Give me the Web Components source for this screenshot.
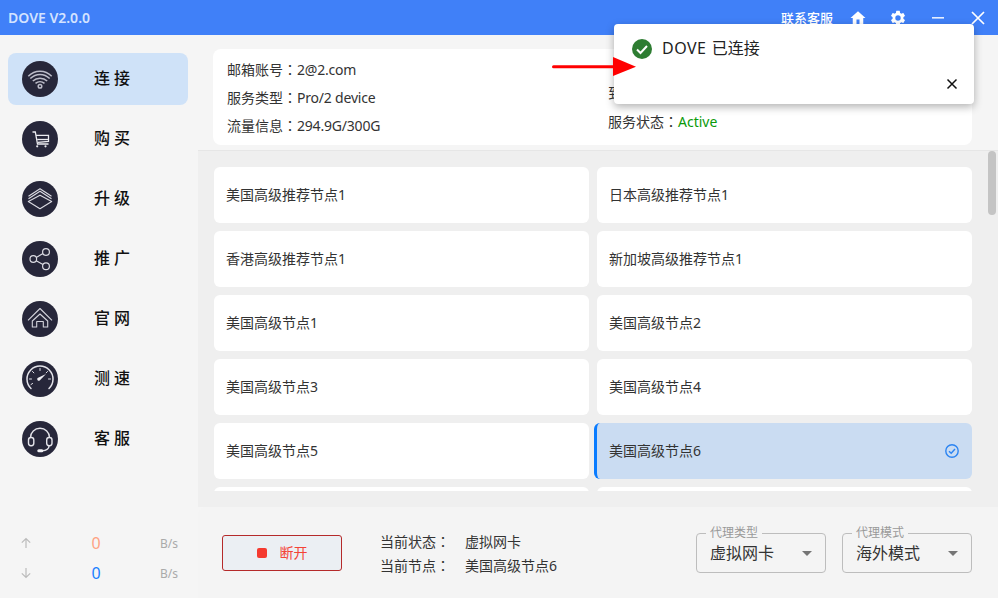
<!DOCTYPE html>
<html>
<head>
<meta charset="utf-8">
<title>DOVE</title>
<style>
  html, body { margin: 0; width: 998px; height: 598px; overflow: hidden; }
  body { font-family: "Noto Sans", "Noto Sans CJK SC", sans-serif; font-size: 14px; color: #222; }
</style>
</head>
<body>
<dove-app>
  <dove-titlebar slot="top" version="DOVE V2.0.0"></dove-titlebar>
  <dove-sidebar slot="side">
    <dove-nav label="连接" active>
      <svg viewBox="0 0 36 36"><g fill="none" stroke="#bcbcc8" stroke-width="1.500"><path d="M6.300 15.300c6.600-6.800 16.800-6.800 23.400 0"/><path d="M8.300 17.500c5.600-5.400 13.800-5.400 19.400 0" stroke-width="1.600"/><path d="M10.800 20c4-3.700 10.400-3.700 14.400 0"/><path d="M13.500 22.400c2.600-2.200 6.400-2.200 9 0"/><circle cx="18" cy="25.300" r="1.800"/></g></svg>
    </dove-nav>
    <dove-nav label="购买">
      <svg viewBox="0 0 36 36"><g fill="none" stroke="#ececf0" stroke-width="1.300"><path d="M10.500 11h2.800l2.200 12h11"/><path d="M14 14.300h12.500v6l-10.500 1"/><path d="M15.200 18.500h11.300"/></g><circle cx="15.200" cy="25.300" r="1.100" fill="#ececf0"/><circle cx="23.500" cy="25.300" r="1.100" fill="#ececf0"/></svg>
    </dove-nav>
    <dove-nav label="升级">
      <svg viewBox="0 0 36 36"><g fill="none" stroke="#dcdce3" stroke-width="1.100" stroke-linejoin="round"><path d="M6.500 15.300 18 7.700l11.500 7.600"/><path d="M6.500 17.800 18 10.300l11.500 7.500"/><path d="M18 14.300 29.700 20.500 18 27.700 6.300 20.500z"/></g></svg>
    </dove-nav>
    <dove-nav label="推广">
      <svg viewBox="0 0 36 36"><g fill="none" stroke="#dcdce3" stroke-width="1.200"><circle cx="11.300" cy="18" r="3.300"/><circle cx="24" cy="11" r="3.400"/><circle cx="24" cy="25.300" r="3.400"/><path d="M14.200 16.400 21 12.600M14.200 19.700l6.800 3.900"/></g></svg>
    </dove-nav>
    <dove-nav label="官网">
      <svg viewBox="0 0 36 36"><g fill="none" stroke="#d4d4dc" stroke-width="1.100" stroke-linejoin="round"><path d="M6 19.300 18 7.500l12 11.800"/><path d="M10.300 26v-6L18 13l7.700 7v6h-4.400v-5.500h-6.600V26z"/></g></svg>
    </dove-nav>
    <dove-nav label="测速">
      <svg viewBox="0 0 36 36"><g fill="none" stroke="#e4e4ea" stroke-width="1.500" stroke-linecap="round"><path d="M9 27.500a13 13 0 1 1 18 0"/><path stroke-width="1" d="M18 7.500v2M7.500 18h2M26.500 18h2M10.500 10.500l1.400 1.400M25.500 10.500l-1.400 1.400M9 23.500l1.600-1"/></g><path d="M15.600 17 24 13l-6.300 6.600a1.700 1.700 0 0 1-2.100-2.600z" fill="#f0f0f4"/></svg>
    </dove-nav>
    <dove-nav label="客服">
      <svg viewBox="0 0 36 36"><g fill="none" stroke="#e4e4ea" stroke-width="1.400"><path d="M8.500 17v-.500a9.500 9.200 0 0 1 19 0v.500"/><rect x="6.500" y="16.500" width="5.300" height="8.200" rx="2.400"/><rect x="24.700" y="16.500" width="5.300" height="8.200" rx="2.400"/><path d="M27 25c0 3-3 4.500-7 4.700"/></g><rect x="15.300" y="28.200" width="6" height="3" rx="1.500" fill="#f0f0f4"/></svg>
    </dove-nav>
    <dove-speed slot="speed"></dove-speed>
  </dove-sidebar>
  <dove-info slot="info"></dove-info>
  <dove-nodelist slot="list">
    <dove-node>美国高级推荐节点1</dove-node>
    <dove-node>日本高级推荐节点1</dove-node>
    <dove-node>香港高级推荐节点1</dove-node>
    <dove-node>新加坡高级推荐节点1</dove-node>
    <dove-node>美国高级节点1</dove-node>
    <dove-node>美国高级节点2</dove-node>
    <dove-node>美国高级节点3</dove-node>
    <dove-node>美国高级节点4</dove-node>
    <dove-node>美国高级节点5</dove-node>
    <dove-node selected>美国高级节点6</dove-node>
    <dove-node></dove-node>
    <dove-node></dove-node>
  </dove-nodelist>
  <dove-footer slot="footer">
    <dove-select label="代理类型" value="虚拟网卡"></dove-select>
    <dove-select label="代理模式" value="海外模式"></dove-select>
  </dove-footer>
  <dove-toast slot="overlay"><span style="letter-spacing:.5px">DOVE</span> 已连接</dove-toast>
</dove-app>

<script>
(function () {
    // small helper, every element just stamps its html into an open shadow root
    function define(name, html) {
        class El extends HTMLElement {
            constructor() {
                super();
                this.attachShadow({ mode: 'open' });
            }
            connectedCallback() {
                let out = html;
                for (const a of this.getAttributeNames()) {
                    out = out.split('{{' + a + '}}').join(this.getAttribute(a));
                }
                this.shadowRoot.innerHTML = out;
            }
        }
        customElements.define(name, El);
    }

    define('dove-app', `
      <style>
        :host { display: grid; grid-template-columns: 198px 800px; grid-template-rows: 35px 563px; width: 998px; height: 598px; position: relative; overflow: hidden; background: #f5f5f5; }
        .top { grid-column: 1 / 3; }
        .main { display: flex; flex-direction: column; min-height: 0; position: relative; }
      </style>
      <div class="top"><slot name="top"></slot></div>
      <slot name="side"></slot>
      <div class="main">
        <slot name="info"></slot>
        <slot name="list"></slot>
        <slot name="footer"></slot>
      </div>
      <slot name="overlay"></slot>
    `);

    define('dove-titlebar', `
      <style>
        :host { display: flex; align-items: center; height: 35px; background: #4080f8; color: #fff; padding: 0 13px 0 8px; box-sizing: border-box; }
        .name { font-size: 14px; font-weight: 600; color: #d4e3ff; flex: 1; }
        .link { font-size: 13px; font-weight: 500; margin-right: 16px; }
        svg { display: block; }
        .home { margin-right: 22px; }
        .gear { margin-right: 25px; }
        .min { margin-right: 27px; }
      </style>
      <span class="name">{{version}}</span>
      <span class="link">联系客服</span>
      <svg class="home" width="18" height="18" viewBox="0 0 24 24" fill="#fff"><path d="M10 20v-6h4v6h5v-8h3L12 3 2 12h3v8z"/></svg>
      <svg class="gear" width="18" height="18" viewBox="0 0 24 24" fill="#fff"><path d="M19.140 12.940c.04-.3.060-.61.060-.94 0-.32-.020-.64-.070-.94l2.030-1.580a.49.49 0 0 0 .12-.61l-1.920-3.320a.49.49 0 0 0-.59-.22l-2.390.96c-.5-.38-1.030-.7-1.620-.94l-.36-2.540a.48.48 0 0 0-.48-.41h-3.840a.47.47 0 0 0-.47.41l-.36 2.540c-.59.24-1.130.57-1.620.94l-2.390-.96a.48.48 0 0 0-.59.22L2.740 8.870a.47.47 0 0 0 .12.61l2.030 1.580c-.05.3-.09.63-.09.94s.02.64.07.94l-2.030 1.580a.49.49 0 0 0-.12.61l1.920 3.320c.12.22.37.29.59.22l2.390-.96c.5.38 1.030.7 1.620.94l.36 2.540c.05.24.24.41.48.41h3.840c.24 0 .44-.17.47-.41l.36-2.540c.59-.24 1.130-.56 1.620-.94l2.390.96c.22.08.47 0 .59-.22l1.920-3.320a.47.47 0 0 0-.12-.61zM12 15.600a3.600 3.600 0 1 1 0-7.200 3.600 3.600 0 0 1 0 7.200z"/></svg>
      <svg class="min" width="12" height="2" viewBox="0 0 12 2"><rect width="12" height="1.600" fill="#e6eeff"/></svg>
      <svg width="14" height="14" viewBox="0 0 14 14" stroke="#fff" stroke-width="1.700"><path d="M1 1l12 12M13 1 1 13"/></svg>
    `);

    define('dove-sidebar', `
      <style>
        :host { display: flex; flex-direction: column; background: #f5f5f5; padding: 18px 10px 0 8px; box-sizing: border-box; gap: 8px; height: 563px; }
        .speed { margin-top: auto; }
      </style>
      <slot></slot>
      <div class="speed"><slot name="speed"></slot></div>
    `);

    define('dove-nav', `
      <style>
        :host { display: flex; align-items: center; height: 52px; border-radius: 8px; padding-left: 14px; color: #111; }
        :host([active]) { background: #cfe2f8; }
        .ic { width: 36px; height: 36px; border-radius: 50%; background: #27273a; flex: none; margin-right: 36px; }
        ::slotted(svg) { display: block; width: 36px; height: 36px; }
        .t { font-size: 16px; font-weight: 500; letter-spacing: 4px; padding-bottom: 4px; }
      </style>
      <div class="ic"><slot></slot></div>
      <span class="t">{{label}}</span>
    `);

    define('dove-speed', `
      <style>
        :host { display: grid; grid-template-columns: 12px 1fr 30px; grid-auto-rows: 30px; align-items: center; margin: 0 0 10px 12px; width: 158px; }
        svg { display: block; }
        .n { text-align: center; font-size: 16px; padding-left: 12px; }
        .up { color: #ffa283; }
        .dn { color: #1a80ff; }
        .u { font-size: 12px; color: #aaa; text-align: right; }
      </style>
      <svg width="12" height="12" viewBox="0 0 12 12" fill="none" stroke="#bbb" stroke-width="1.200"><path d="M6 11V1.500M1.800 5.700 6 1.500l4.200 4.200"/></svg>
      <span class="n up">0</span><span class="u">B/s</span>
      <svg width="12" height="12" viewBox="0 0 12 12" fill="none" stroke="#bbb" stroke-width="1.200"><path d="M6 1v9.500M1.800 6.300 6 10.500l4.200-4.200"/></svg>
      <span class="n dn">0</span><span class="u">B/s</span>
    `);

    define('dove-info', `
      <style>
        :host { display: block; height: 116px; padding: 14px 26px 0 15px; box-sizing: border-box; border-bottom: 1px solid #e6e6e6; background: #f5f5f5; flex: none; }
        .card { display: grid; grid-template-columns: 381px 1fr; height: 96px; background: #fff; border-radius: 8px; padding: 0 14px; box-sizing: border-box; font-size: 14px; color: #333; }
        .l { padding-top: 6px; }
        .r { padding-top: 2px; }
        .row { height: 28px; line-height: 28px; white-space: nowrap; }
        .ok { color: #0a9a0a; }
        .c { font-family: "Noto Sans CJK TC", sans-serif; }
        .v { letter-spacing: -.2px; }
      </style>
      <div class="card">
        <div class="l">
          <div class="row">邮箱账号<span class="c">：</span><span class="v">2@2.com</span></div>
          <div class="row">服务类型<span class="c">：</span><span class="v">Pro/2 device</span></div>
          <div class="row">流量信息<span class="c">：</span><span class="v">294.9G/300G</span></div>
        </div>
        <div class="r">
          <div class="row"></div>
          <div class="row">到</div>
          <div class="row">服务状态<span class="c">：</span><span class="ok">Active</span></div>
        </div>
      </div>
    `);

    define('dove-nodelist', `
      <style>
        :host { display: flex; flex: 1; min-height: 0; background: #efefef; position: relative; padding-bottom: 16px; box-sizing: border-box; }
        .scroll { flex: 1; min-height: 0; overflow: hidden; }
        .grid { display: grid; grid-template-columns: 375px 375px; gap: 8px; padding: 16px 0 0 16px; }
        .thumb { position: absolute; right: 2px; top: 0; width: 8px; height: 64px; border-radius: 4px; background: #c4c4c4; }
      </style>
      <div class="scroll"><div class="grid"><slot></slot></div></div>
      <div class="thumb"></div>
    `);

    define('dove-node', `
      <style>
        :host { display: flex; align-items: center; justify-content: space-between; height: 56px; background: #fff; border-radius: 6px; padding: 0 13px 2px 12px; box-sizing: border-box; font-size: 14px; color: #333; }
        :host([selected]) { background: #cadcf2; border-left: 3px solid #0a7cff; margin-left: -3px; }
        svg { display: none; margin-top: 2px; }
        :host([selected]) svg { display: block; }
      </style>
      <slot></slot>
      <svg width="14" height="14" viewBox="0 0 14 14" fill="none" stroke="#2b84f2" stroke-width="1.400"><circle cx="7" cy="7" r="6.200"/><path d="M4 7.200 6.200 9.300 10 5"/></svg>
    `);

    define('dove-footer', `
      <style>
        :host { display: flex; align-items: center; flex: none; height: 91px; background: #f4f4f4; border-radius: 8px 0 0 0; padding: 0 26px 0 24px; box-sizing: border-box; color: #333; }
        button { display: flex; align-items: center; justify-content: center; width: 120px; height: 36px; background: #ebeff3; border: 1px solid #b52a2a; border-radius: 3px; font: inherit; font-size: 14px; color: #f44336; padding: 0; margin-right: 38px; }
        i { width: 10px; height: 10px; background: #f53a2f; border-radius: 2px; margin-right: 13px; }
        b { font-weight: 400; margin-top: -1px; }
        .st { display: grid; grid-template-columns: 85px auto; grid-auto-rows: 24px; align-items: center; font-size: 14px; flex: 1; }
        .c { font-family: "Noto Sans CJK TC", sans-serif; }
        .sel { display: flex; gap: 16px; }
      </style>
      <button><i></i><b>断开</b></button>
      <div class="st">
        <span>当前状态<span class="c">：</span></span><span>虚拟网卡</span>
        <span>当前节点<span class="c">：</span></span><span>美国高级节点6</span>
      </div>
      <div class="sel"><slot></slot></div>
    `);

    define('dove-select', `
      <style>
        :host { display: block; position: relative; width: 130px; height: 40px; border: 1px solid #bdbdbd; border-radius: 4px; box-sizing: border-box; }
        .lg { position: absolute; left: 9px; top: -8px; padding: 0 4px; background: #f4f4f4; font-size: 12px; line-height: 14px; color: #999; }
        .v { display: flex; align-items: center; justify-content: space-between; height: 38px; padding: 0 13px 0 13px; font-size: 16px; color: #333; }
        .v span:first-child { margin-top: -2px; }
        .c { width: 0; height: 0; margin-top: 2px; border: 5px solid transparent; border-top-color: #757575; border-bottom: 0; }
      </style>
      <span class="lg">{{label}}</span>
      <div class="v"><span>{{value}}</span><span class="c"></span></div>
    `);

    define('dove-toast', `
      <style>
        :host { position: absolute; left: 614px; top: 24px; width: 360px; height: 80px; background: #fff; border-radius: 4px; box-shadow: 0 3px 8px rgba(0,0,0,.3); color: #222; font-size: 16px; }
        .msg { display: flex; align-items: center; gap: 10px; padding: 14px 18px 0; line-height: 22px; }
        .msg span { margin-top: -1px; word-spacing: 1px; }
        .x { position: absolute; right: 16px; bottom: 14px; display: block; }
        .arrow { position: absolute; left: -62px; top: 33px; display: block; overflow: visible; }
      </style>
      <div class="msg">
        <svg width="20" height="20" viewBox="0 0 20 20"><circle cx="10" cy="10" r="10" fill="#2e7d32"/><path d="M5 10.500 8.500 14 15 7" fill="none" stroke="#fff" stroke-width="2"/></svg>
        <span><slot></slot></span>
      </div>
      <svg class="x" width="12" height="12" viewBox="0 0 12 12" stroke="#111" stroke-width="1.500"><path d="M1.500 1.500l9 9M10.500 1.500l-9 9"/></svg>
      <svg class="arrow" width="84" height="20" viewBox="0 0 84 20"><path d="M1.500 9.800H62" stroke="#f00" stroke-width="3" stroke-linecap="round"/><path d="M61 0l23 9.800L61 19z" fill="#f00"/></svg>
    `);
})();
</script>
</body>
</html>
